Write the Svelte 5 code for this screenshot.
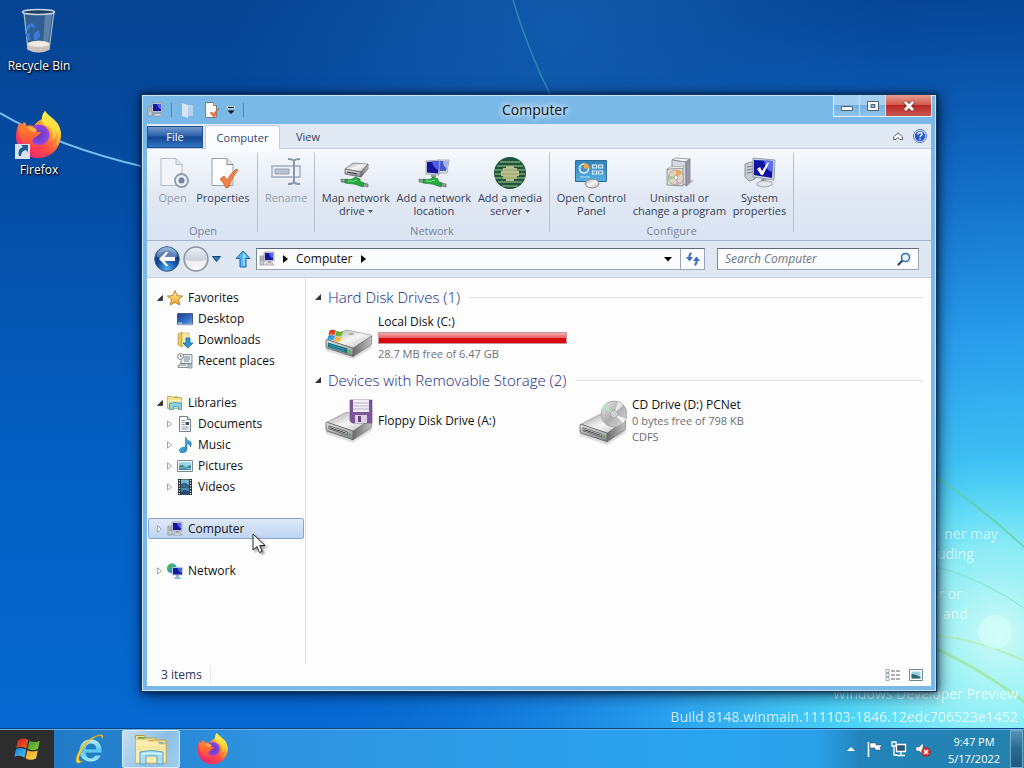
<script>
  const tree = [
    { label: 'Favorites', icon: 'star', open: true, children: [
      { label: 'Desktop', icon: 'desktop' },
      { label: 'Downloads', icon: 'downloads' },
      { label: 'Recent places', icon: 'recent' }
    ] },
    { label: 'Libraries', icon: 'libraries', open: true, children: [
      { label: 'Documents', icon: 'documents', more: true },
      { label: 'Music', icon: 'music', more: true },
      { label: 'Pictures', icon: 'pictures', more: true },
      { label: 'Videos', icon: 'videos', more: true }
    ] },
    { label: 'Computer', icon: 'computer', children: [] },
    { label: 'Network', icon: 'network', children: [] }
  ];

  const ribbon = [
    { label: 'Open', size: 'g-open', items: [
      { lines: ['Open'], icon: 'open', off: true },
      { lines: ['Properties'], icon: 'properties' }
    ] },
    { label: '', size: 'g-rename', items: [{ lines: ['Rename'], icon: 'rename', off: true }] },
    { label: 'Network', size: 'g-network', items: [
      { lines: ['Map network', 'drive'], icon: 'mapdrive', menu: true },
      { lines: ['Add a network', 'location'], icon: 'addnet' },
      { lines: ['Add a media', 'server'], icon: 'media', menu: true }
    ] },
    { label: 'Configure', size: 'g-configure', items: [
      { lines: ['Open Control', 'Panel'], icon: 'control' },
      { lines: ['Uninstall or', 'change a program'], icon: 'uninstall' },
      { lines: ['System', 'properties'], icon: 'system' }
    ] }
  ];

  const sections = [
    { title: 'Hard Disk Drives (1)', items: [
      { name: 'Local Disk (C:)', used: 100, notes: ['28.7 MB free of 6.47 GB'], icon: 'localdisk' }
    ] },
    { title: 'Devices with Removable Storage (2)', items: [
      { name: 'Floppy Disk Drive (A:)', notes: [], icon: 'floppy' },
      { name: 'CD Drive (D:) PCNet', notes: ['0 bytes free of 798 KB', 'CDFS'], icon: 'cd' }
    ] }
  ];

  let selected = $state('Computer');
  let query = $state('');
</script>

{#snippet driveBase()}
  <path d="M0 26 28 36 47 24v8L28 44 0 35z" fill="#999" opacity=".3" />
  <path d="M1 23 20 13q1-.5 3 0l23 5q2 1 1 2L28 33z" fill="url(#metalTop)" stroke="#888" stroke-width=".6" />
  <path d="M0 24q0-1 1-1l27 9v9L1 32q-1-1-1-2z" fill="url(#metalFront)" stroke="#555" stroke-width=".8" />
  <path d="M28 32 47 19v8q0 1-1 2L28 41z" fill="url(#metalSide)" stroke="#666" stroke-width=".6" />
{/snippet}

{#snippet driveSlot()}
  <path d="M3 26.500 22 33v3L3 29.500z" fill="#eee" stroke="#444" stroke-width=".8" />
  <path d="M4 28.500 21 34.300" stroke="#333" stroke-width="1" />
  <path d="M24.500 34.500v3" stroke="#28c22c" stroke-width="1.600" />
{/snippet}

{#snippet smallDrive()}
  <path d="M5 12 13 6l15 1-7 8z" fill="url(#metalTop)" stroke="#777" stroke-width=".7" />
  <path d="M5 12l16 3v5L5 17z" fill="url(#metalFront)" stroke="#555" stroke-width=".7" />
  <path d="M21 15l7-8v5l-7 8z" fill="url(#metalSide)" stroke="#666" stroke-width=".7" />
  <path d="M7 15l10 2" stroke="#333" />
{/snippet}

{#snippet netPipe()}
  <path d="M1 22l8 1v3l-8-1z" fill="#8fa39a" stroke="#56655d" stroke-width=".6" />
  <path d="M19 25l9 2v3l-9-2z" fill="#8fa39a" stroke="#56655d" stroke-width=".6" />
  <path d="M5 22q7 2 10-2l5 2q-1 3 4 4l-1 4q-9-4-18-4z" fill="#21ab3c" stroke="#0d7422" stroke-width=".6" />
  <path d="M8 24q5 1 9-1" stroke="#82e796" fill="none" />
{/snippet}

{#snippet pc()}
  <path d="M1 5h4v9H1z" fill="#c9ccd0" stroke="#83888f" stroke-width=".7" />
  <path d="M2 7h2M2 9h2" stroke="#6a6e75" stroke-width=".7" />
  <path d="M5 1h10v9H5z" fill="#d3d6dc" stroke="#8d929b" stroke-width=".7" />
  <path d="M6 2h8v7H6z" fill="#14149e" />
  <path d="M10 2h4v5q-3 0-4-5z" fill="#5260e8" />
  <path d="M9 10h3v2H9z" fill="#9b9fa6" />
  <path d="M6 14q1-3 5-2.500T15 14z" fill="#dde0e4" stroke="#888" stroke-width=".6" />
{/snippet}

{#snippet flag()}
  <path d="M2 4q4-3 8.500-.5L9 10.500Q5 8 .7 10z" fill="url(#fRed)" />
  <path d="M11.500 4q4 2.500 8.500.3L18.500 11Q14 13 10 10.800z" fill="url(#fGreen)" />
  <path d="M.5 11q4-2 8.400.5L7.500 18Q3 15.500-1 17.500z" fill="url(#fBlue)" />
  <path d="M9.800 12q4 2 8.500.2L17 18.500q-4.500 2.500-8.700 0z" fill="url(#fYellow)" />
{/snippet}

{#snippet firefox()}
  <path d="M42 12c3 6 5 12 3 19-3 10-12 16-22 16C10 47 1 37 1 25c0-5 1-9 4-14l1 4c1-2 2-3 3-4l2 4c3-1 6-1 8 0 2-4 6-6 8-7 0-3 1-6 3-8 2 5 9 9 12 15z" fill="url(#foxBody)" />
  <path d="M30 0c-4 5-4 11-1 14 8 2 10 9 8 15 4-1 5-6 4-9 3 6 1 13-4 17 9-4 11-14 7-22C41 8 33 5 30 0z" fill="url(#foxFlame)" />
  <circle cx="24" cy="24" r="10.500" fill="url(#foxGlobe)" />
  <path d="M4 13l2 3 4-5 2 5c4-1 7 0 10 3l-1 2h5c-1 4-6 4-8 7s1 6 6 6c4 0 7-2 9-5-1 9-12 13-20 8C5 32 2 21 4 13z" fill="url(#foxHead)" />
  <path d="M12 16c4-1 7 0 10 3l-2 2c-3 0-5-1-8-5z" fill="#ffbd4f" opacity=".8" />
{/snippet}

{#snippet art(name)}
  {#if name === 'star'}
    <svg class="i16" viewBox="0 0 16 16"><path d="M8 .7l2.200 4.900 5.300.5-4 3.600 1.200 5.300L8 12.300 3.300 15l1.200-5.300-4-3.600 5.300-.5z" fill="url(#gold)" stroke="#b8731a" stroke-width=".9" /></svg>
  {:else if name === 'desktop'}
    <svg class="i16" viewBox="0 0 16 16"><path d="M.5 2.500h15v11H.5z" fill="url(#screen)" stroke="#4c6178" /><path d="M1 13.500h15" stroke="#93a9bd" stroke-width="1.500" /><path d="M1 12h4" stroke="#c2e6ff" /></svg>
  {:else if name === 'downloads'}
    <svg class="i16" viewBox="0 0 16 16"><path d="M1 2l4-2v15l-4-2z" fill="#e7c767" stroke="#b28f38" stroke-width=".6" /><path d="M5 1h7v13H5z" fill="#faeaa5" stroke="#c7a24c" stroke-width=".6" /><path d="M9 6h4v5h3l-5 5-5-5h3z" fill="#2b93d6" stroke="#0d5d9d" stroke-width=".7" /></svg>
  {:else if name === 'recent'}
    <svg class="i16" viewBox="0 0 16 16"><path d="M4 1.500h11v9H4zM3 10.500h9v4H1v-2h2z" fill="#e9ecef" stroke="#7c858e" stroke-width=".9" /><path d="M7 4h6M7 6h6M7 8h5M4 12h5" stroke="#7b858d" /><circle cx="3.500" cy="3.500" r="3" fill="#f6f7f8" stroke="#7c858e" /><path d="M3.500 1.800v2h1.500" stroke="#555" stroke-width=".7" fill="none" /><path d="M11 11h4v4h-4z" fill="#bdc3c9" stroke="#7c858e" stroke-width=".7" /></svg>
  {:else if name === 'libraries'}
    <svg class="i16" viewBox="0 0 16 16"><path d="M.5 1.500h5l1 1h8v11H.5z" fill="#f5df89" stroke="#bea249" stroke-width=".8" /><path d="M7 1.500h4v1H7z" fill="#6db64c" /><path d="M.5 5.500h14" stroke="#fff6c9" /><path d="M2.500 8.500q5-2 12 0v6h-3v-3h-5v3h-4z" fill="#8bd2ec" stroke="#3b92b8" stroke-width=".8" /></svg>
  {:else if name === 'documents'}
    <svg class="i16" viewBox="0 0 16 16"><path d="M2.500.5h8l3 3v12h-11z" fill="#fbfcfd" stroke="#74818e" /><path d="M10.500.5v3h3" fill="#d9e1e8" stroke="#74818e" /><path d="M4.500 4.500h4M4.500 6.500h3M4.500 8.500h3M4.500 11h7M4.500 13h7" stroke="#8a98a6" /><path d="M8.500 6h3.500v3H8.500z" fill="#3d5366" /></svg>
  {:else if name === 'music'}
    <svg class="i16" viewBox="0 0 16 16"><path d="M8.500 0q1 3 4 4t1 6q-.3-3-3.500-3.500V12q0 3-3.500 3.800-4 .5-4.200-2.300Q2.500 10 8.500 10z" fill="url(#note)" stroke="#136b9f" stroke-width=".5" /></svg>
  {:else if name === 'pictures'}
    <svg class="i16" viewBox="0 0 16 16"><path d="M.5 2.500h15v11H.5z" fill="#fff" stroke="#7d8b97" /><path d="M2 4h12v8H2z" fill="#9bd3ef" /><path d="M2 8q3-2 5 0t7-1v2H2z" fill="#3f866f" /><path d="M2 9h12v3H2z" fill="#357fa9" /><path d="M2 10q5-1 12 1" stroke="#84cde6" fill="none" /></svg>
  {:else if name === 'videos'}
    <svg class="i16" viewBox="0 0 16 16"><path d="M1 0h14v16H1z" fill="#222c33" /><path d="M4 .5h8v7H4z" fill="#7db9d3" /><path d="M4 8.500h8v7H4z" fill="#458eb2" /><path d="M4 5q4-3 8 1v1.500H4z" fill="#35658b" /><path d="M4 13q4-4 8 0v2.500H4z" fill="#254c7b" /><path d="M2.500 1v15M13.500 1v15" stroke="#e3ebd9" stroke-width="1.300" stroke-dasharray="1.300 1.300" /></svg>
  {:else if name === 'computer'}
    <svg class="i16" viewBox="0 0 16 16">{@render pc()}</svg>
  {:else if name === 'network'}
    <svg class="i16" viewBox="0 0 16 16"><circle cx="5" cy="5.500" r="5" fill="#2b9bd3" /><path d="M1 3q4-4 6-1L5 5 3 5 2 8Q0 6 1 3z" fill="#47b84f" /><path d="M5.500 4.500h10v7.500h-10z" fill="#151d9e" stroke="#c6cbd7" /><path d="M10.500 5h4.500v5q-3 0-4.500-5z" fill="#4967e8" /><path d="M9.500 12h2v2h-2z" fill="#7a8b9f" /><path d="M7.500 15h6" stroke="#50aee0" stroke-width="1.500" /></svg>
  {:else if name === 'open'}
    <svg class="i32" viewBox="0 0 32 32"><path d="M4 1.500h15l6 6v21H4z" fill="#f1f4f9" stroke="#b6bdc9" /><path d="M19 1.500v6h6" fill="#dde2ea" stroke="#b6bdc9" /><circle cx="24.500" cy="23.500" r="6.500" fill="#e9eef5" stroke="#919cad" stroke-width="1.800" /><circle cx="24.500" cy="23.500" r="3" fill="#76839a" /></svg>
  {:else if name === 'properties'}
    <svg class="i32" viewBox="0 0 32 32"><path d="M5 1.500h15l6 6v21H5z" fill="#fdfdfe" stroke="#9aa0a8" /><path d="M20 1.500v6h6" fill="#e3e6ea" stroke="#858a92" /><path d="M13 22l4-3 3 4q4-7 9-11l2 1q-6 7-9 17l-3 1q-2-5-6-9z" fill="#f08049" stroke="#cc5622" stroke-width=".7" /></svg>
  {:else if name === 'rename'}
    <svg class="i32" viewBox="0 0 32 32"><path d="M2 9h28v11H2z" fill="#eef2f8" stroke="#9fabbb" stroke-width="1.400" /><path d="M5 12h14v5H5z" fill="#b9c2d0" stroke="#97a3b5" /><path d="M18 2q5 0 6 2 1-2 6-2M18 27q5 0 6-2 1 2 6 2M24 4v21" stroke="#8995a8" stroke-width="2" fill="none" /></svg>
  {:else if name === 'mapdrive'}
    <svg class="i32" viewBox="0 0 32 32">{@render smallDrive()}{@render netPipe()}</svg>
  {:else if name === 'addnet'}
    <svg class="i32" viewBox="0 0 32 32"><path d="M20 3h11l-2 13H19z" fill="#dfe3ea" stroke="#8d93a5" stroke-width=".7" /><path d="M21 4h9l-2 10h-7z" fill="#4657d6" /><path d="M25 4h5l-1 7q-4-1-4-7z" fill="#a8b4f6" /><path d="M8 4l14-1-1 15-13-1z" fill="#cfd5df" stroke="#8d93a5" stroke-width=".7" /><path d="M9 5l12-1-1 12.500-11-1z" fill="#14149b" /><path d="M14 4.500l7-.5-.6 9Q15 11 14 4.500z" fill="#4e5de4" /><path d="M13 18l5 .3v2l-5-.3z" fill="#8b9199" />{@render netPipe()}</svg>
  {:else if name === 'media'}
    <svg class="i32" viewBox="0 0 32 32"><circle cx="16" cy="16" r="16" fill="#1d5540" /><path d="M6 5h20M3 9h26M1 13h30M1 17h30M1 21h30M4 25h24M8 29h16" stroke="#7ba26e" stroke-width="1.300" /><path d="M12 9h8v2h3v3h2v5h-2v3h-3v2h-8v-2H9v-3H7v-5h2v-3h3z" fill="#bdbf88" /><path d="M8 17h16M9 21h14M10 13h13" stroke="#81a071" stroke-width=".8" /></svg>
  {:else if name === 'control'}
    <svg class="i32" viewBox="0 0 32 32"><path d="M.5 3.500h31v21H.5z" fill="url(#panel)" stroke="#2d6c98" /><circle cx="9" cy="11.500" r="4.500" fill="#4495cd" stroke="#e8f5ff" stroke-width="1.500" /><path d="M9 11.500V6a5.500 5.500 0 0 1 5.500 5.500z" fill="#f5a63c" /><path d="M5 20h10" stroke="#bae0f5" /><path d="M17.500 8h4v3h-4zm6 0h4v3h-4zm-6 6h4v3h-4zm6 0h4v3h-4z" fill="#4697cb" stroke="#dcf0fb" stroke-width="1.200" /><ellipse cx="17" cy="26.500" rx="7" ry="4.500" fill="url(#metalTop)" stroke="#858c96" /></svg>
  {:else if name === 'uninstall'}
    <svg class="i32" viewBox="0 0 32 32"><path d="M22 31l9-7-2-2z" fill="#777" opacity=".35" /><path d="M9 3l4-2 14 1-4 3z" fill="#f5f5f7" stroke="#85858e" stroke-width=".8" /><path d="M9 3l14 2v23L9 25z" fill="#d6d7e1" stroke="#85858e" stroke-width=".8" /><path d="M23 5l4-3v23l-4 4z" fill="#9898a8" stroke="#777784" stroke-width=".7" /><path d="M4 12l16-1v18l-16-1z" fill="#d9dbd9" stroke="#84877e" stroke-width=".8" /><path d="M4 12l3-2 16-1-3 2z" fill="#f5f7ef" stroke="#84877e" stroke-width=".5" /><circle cx="13" cy="20.500" r="7.500" fill="#dad7bd" stroke="#979786" stroke-width=".7" /><path d="M13 20.500V13a7.500 7.500 0 0 1 6 3z" fill="#eda864" /><path d="M13 20.500l-7 2a7 7 0 0 1-.3-4z" fill="#9fc694" /><path d="M13 20.500l4 6.500a8 8 0 0 1-4 1z" fill="#d8a9cd" /><circle cx="13" cy="20.500" r="2" fill="#f6f6f6" stroke="#888" stroke-width=".6" /></svg>
  {:else if name === 'system'}
    <svg class="i32" viewBox="0 0 32 32"><path d="M1 7l6-2 4 1v16l-6 2-4-4z" fill="#c8cbd0" stroke="#7d838a" stroke-width=".8" /><path d="M3 10l6-1M3 13l6-1M3 16l6-1" stroke="#777e87" stroke-width=".9" /><path d="M9 1l22 2-1 20-21-3z" fill="#cdd5df" stroke="#848c9b" stroke-width=".8" /><path d="M10 3l19 1-1 17-18-3z" fill="#1013a0" /><path d="M20 3.500l9 .5-.7 11Q21 13 20 3.500z" fill="#5870ed" /><path d="M13 12l3-2 2 4 6-9 1 1-6 12h-2z" fill="#fff" /><path d="M17 22h5v3h-5z" fill="#949ba5" /><path d="M13 26q5-4 15-1v3q-8 4-15 0z" fill="#e3e6e9" stroke="#828990" stroke-width=".7" /></svg>
  {:else if name === 'localdisk'}
    <svg class="i48" viewBox="0 0 48 48"><g transform="translate(1 4) scale(.97 .94)">{@render driveBase()}<path d="M2 26l20 6.500v5L2 31z" fill="#126c83" /><path d="M3 28l16 5.500M3 30l16 5.500" stroke="#48a8b5" stroke-width=".8" /><path d="M24.500 34v4" stroke="#38d02e" stroke-width="2" /><ellipse cx="26" cy="17" rx="3" ry="1" fill="#aaa" /></g><g transform="translate(3 14) scale(.75 .7)">{@render flag()}</g></svg>
  {:else if name === 'floppy'}
    <svg class="i48" viewBox="0 0 48 48"><g transform="translate(1 3) scale(.97 .97)">{@render driveBase()}{@render driveSlot()}</g><path d="M25 3h22v23H27l-2-2z" fill="#7d579c" stroke="#64427e" stroke-width=".6" /><path d="M28 3h16v12H28z" fill="#f1edf6" /><path d="M28 6h16M28 9h16M28 12h16" stroke="#bbaec8" /><path d="M30 18h12v8H30z" fill="#d9cfdf" /><path d="M33 19h3v6h-3z" fill="#6b477f" /></svg>
  {:else if name === 'cd'}
    <svg class="i48" viewBox="0 0 48 48"><g transform="translate(1 5) scale(.97 .97)">{@render driveBase()}{@render driveSlot()}</g><circle cx="35" cy="17" r="13" fill="url(#disc)" stroke="#999" stroke-width=".7" /><path d="M35 17L23 12a13 13 0 0 1 4-5.500z" fill="#b9dfb9" /><path d="M35 17l9 9a13 13 0 0 0 3-4z" fill="#fff" opacity=".8" /><path d="M35 17l4-12a13 13 0 0 1 5 3z" fill="#fff" opacity=".7" /><circle cx="35" cy="17" r="3.500" fill="#ddd" stroke="#999" stroke-width=".7" /><circle cx="35" cy="17" r="1.300" fill="#fff" stroke="#888" stroke-width=".5" /></svg>
  {/if}
{/snippet}

<svg class="defs" width="0" height="0" aria-hidden="true">
  <defs>
    <linearGradient id="metalTop" x2="1" y2="1"><stop stop-color="#a0a0a0" /><stop offset=".5" stop-color="#f6f6f6" /><stop offset="1" stop-color="#b4b4b4" /></linearGradient>
    <linearGradient id="metalFront" y2="1" x2="0"><stop stop-color="#e8e8e8" /><stop offset="1" stop-color="#808080" /></linearGradient>
    <linearGradient id="metalSide"><stop stop-color="#6c6c6c" /><stop offset="1" stop-color="#c0c0c0" /></linearGradient>
    <linearGradient id="disc" x2="1" y2="1"><stop stop-color="#ececec" /><stop offset=".5" stop-color="#aeaeae" /><stop offset="1" stop-color="#dcdcdc" /></linearGradient>
    <linearGradient id="panel" x2="0" y2="1"><stop stop-color="#3182bb" /><stop offset="1" stop-color="#57b0e0" /></linearGradient>
    <linearGradient id="screen" x2="1" y2="1"><stop stop-color="#183f94" /><stop offset=".6" stop-color="#356dc4" /><stop offset="1" stop-color="#74a9e3" /></linearGradient>
    <linearGradient id="note" x2="1" y2="1"><stop stop-color="#72c7ec" /><stop offset="1" stop-color="#1274b1" /></linearGradient>
    <linearGradient id="gold" x2="0" y2="1"><stop stop-color="#fff3a8" /><stop offset="1" stop-color="#f0a021" /></linearGradient>
    <linearGradient id="foxBody" x1="1" y1="0" x2=".3" y2="1"><stop stop-color="#fff04a" /><stop offset=".4" stop-color="#ff9c2a" /><stop offset=".7" stop-color="#ff4a48" /><stop offset="1" stop-color="#ee2373" /></linearGradient>
    <linearGradient id="foxFlame" x2="0" y2="1"><stop stop-color="#fff450" /><stop offset=".6" stop-color="#ffd13a" /><stop offset="1" stop-color="#ff9a2c" /></linearGradient>
    <linearGradient id="foxHead" x2="0" y2="1"><stop stop-color="#ff9128" /><stop offset=".6" stop-color="#ff5c38" /><stop offset="1" stop-color="#fa375f" /></linearGradient>
    <radialGradient id="foxGlobe"><stop stop-color="#6037b8" /><stop offset="1" stop-color="#9648e8" /></radialGradient>
    <linearGradient id="fRed" x2="1" y2="1"><stop stop-color="#c9201d" /><stop offset="1" stop-color="#f8622c" /></linearGradient>
    <linearGradient id="fGreen" x2="1" y2="1"><stop stop-color="#3d9528" /><stop offset="1" stop-color="#8ace3a" /></linearGradient>
    <linearGradient id="fBlue" x2="1" y2="1"><stop stop-color="#1584cf" /><stop offset="1" stop-color="#48bdf3" /></linearGradient>
    <linearGradient id="fYellow" x2="1" y2="1"><stop stop-color="#f79c22" /><stop offset="1" stop-color="#ffda52" /></linearGradient>
    <radialGradient id="ball" cx=".5" cy=".9" r=".8"><stop stop-color="#4fb4f2" /><stop offset=".45" stop-color="#1958a8" /><stop offset=".8" stop-color="#0f3882" /><stop offset="1" stop-color="#6c97ce" /></radialGradient>
    <linearGradient id="pale" x2="0" y2="1"><stop stop-color="#eef1f6" /><stop offset=".5" stop-color="#ccd3de" /><stop offset="1" stop-color="#f4f7fa" /></linearGradient>
    <linearGradient id="ie" x2="0" y2="1"><stop stop-color="#c4f3ff" /><stop offset=".5" stop-color="#58c7f3" /><stop offset="1" stop-color="#a8eaff" /></linearGradient>
  </defs>
</svg>

<div class="screen">
  <main class="desktop">
    <svg class="wallpaper" viewBox="0 0 1024 768" preserveAspectRatio="none" aria-hidden="true">
      <defs>
        <linearGradient id="sky" x2="0" y2="1"><stop stop-color="#064392" /><stop offset=".25" stop-color="#054da4" /><stop offset=".6" stop-color="#0460c4" /><stop offset="1" stop-color="#0669d2" /></linearGradient>
        <radialGradient id="glow" gradientUnits="userSpaceOnUse" cx="1010" cy="690" r="720"><stop stop-color="#70ecf5" /><stop offset=".25" stop-color="#48cff5" /><stop offset=".5" stop-color="#2ba2f0" stop-opacity=".9" /><stop offset="1" stop-color="#0c6ad5" stop-opacity="0" /></radialGradient>
        <radialGradient id="core" gradientUnits="userSpaceOnUse" cx="1000" cy="635" r="180"><stop stop-color="#cdfbf6" /><stop offset=".5" stop-color="#9cf2f6" stop-opacity=".75" /><stop offset="1" stop-color="#60def6" stop-opacity="0" /></radialGradient>
        <radialGradient id="topglow" gradientUnits="userSpaceOnUse" cx="560" cy="20" r="330"><stop stop-color="#1763b5" stop-opacity=".7" /><stop offset="1" stop-color="#1767bd" stop-opacity="0" /></radialGradient>
      </defs>
      <path d="M0 0h1024v768H0z" fill="url(#sky)" />
      <path d="M0 0h1024v768H0z" fill="url(#topglow)" />
      <path d="M0 0h1024v768H0z" fill="url(#glow)" />
      <path d="M0 0h1024v768H0z" fill="url(#core)" />
      <path d="M0 113Q56 146 145 167" fill="none" stroke="#78bdf0" stroke-width="2" />
      <path d="M513 0q16 54 40 100" fill="none" stroke="#2f86b5" stroke-width="1.500" />
      <g fill="none" stroke="#62cf96" opacity=".7">
        <path d="M935 476q50 34 92 74" stroke-width="2" />
        <path d="M935 566q50 14 92 44" stroke="#7bdcc1" />
        <path d="M935 635q45 5 92 27" stroke="#b0eda8" stroke-width="2" />
        <path d="M935 648q48 22 92 56" stroke="#9de58f" stroke-width="3" />
      </g>
      <circle cx="995" cy="632" r="17" fill="#d9fffa" opacity=".5" />
    </svg>

    <div class="notice">
      <p class="n1">ner may</p>
      <p class="n2">uding</p>
      <p class="n3">r or</p>
      <p class="n4">and</p>
    </div>
    <p class="build">Windows Developer Preview<br />Build 8148.winmain.111103-1846.12edc706523e1452</p>

    <div class="shortcuts">
      <button class="shortcut">
        <svg viewBox="0 0 48 48" aria-hidden="true">
          <path d="M8 5l5 38q10 6 21 0l5-38z" fill="#54748f" opacity=".55" />
          <path d="M9 5l4 38M39 5l-5 38" stroke="#a3b9c8" stroke-width="1.200" />
          <path d="M30 7h7l-4 32h-5z" fill="#dbe8ef" opacity=".25" />
          <ellipse cx="23.500" cy="5" rx="16" ry="2.500" fill="#1d3f65" stroke="#c4d5df" stroke-width="1.500" />
          <path d="M12 36q12-5 23 0l-1 7q-10 5-21 0z" fill="#c9c3bc" />
          <ellipse cx="23.500" cy="37" rx="11" ry="3" fill="#efeae3" />
          <path d="M13 18l4-2 4 4-3 1-2-2-3 5-2-2zM11 26l4 0-1 4 2 2-2 2-3-5zM19 33v-7l5-3 1 6-3 4z" fill="#3a7bdd" />
        </svg>
        <span>Recycle Bin</span>
      </button>
      <button class="shortcut">
        <svg viewBox="0 0 48 48" aria-hidden="true">
          {@render firefox()}
          <path d="M0 33h15v15H0z" fill="#d9e2ec" />
          <path d="M4 45q-2-7 4-9L6 34h7v7l-2-2q-5 1-5 6z" fill="#1d5ba5" />
        </svg>
        <span>Firefox</span>
      </button>
    </div>

    <section class="window" aria-label="Computer">
      <header class="titlebar">
        <div class="quick">
          <button aria-label="System menu"><svg class="i16" viewBox="0 0 16 16">{@render pc()}</svg></button>
          <i class="bar"></i>
          <button aria-label="Open" class="dim"><svg class="i16" viewBox="0 0 16 16"><path d="M2 1l6 2v13l-6-2z" fill="#d8e5f4" /><path d="M8 3h5v11H8z" fill="#b6cfec" /></svg></button>
          <button aria-label="Properties"><svg class="i16" viewBox="0 0 16 16"><path d="M1.500.5h8l3 3v12h-11z" fill="#fff" stroke="#777f89" /><path d="M9.500.5v3h3" fill="#ddd" stroke="#777f89" /><path d="M6 11l2-1 1.500 2Q12 8 15 6q-3 4-4 9H9.500Q8 13 6 11z" fill="#ee763b" stroke="#c95c25" stroke-width=".5" /></svg></button>
          <button aria-label="Customize toolbar" class="thin"><svg width="8" height="8" viewBox="0 0 8 8"><path d="M0 1.500h8" stroke="#fff" stroke-width="3" opacity=".6" /><path d="M1 1.500h6" stroke="#111" stroke-width="1.200" /><path d="M.5 4.500h7L4 8z" fill="#111" /></svg></button>
          <i class="bar"></i>
        </div>
        <h1>Computer</h1>
        <div class="captions">
          <button aria-label="Minimize"><svg width="14" height="12" viewBox="0 0 14 12"><path d="M1.500 6.500h11v4h-11z" fill="#fff" stroke="#4d6075" /></svg></button>
          <button aria-label="Maximize"><svg width="14" height="12" viewBox="0 0 14 12"><path d="M1.500 1.500h11v9h-11z" fill="#fff" stroke="#4d6075" /><path d="M5 4.500h4v3H5z" fill="#7eb8e3" stroke="#4d6075" /></svg></button>
          <button aria-label="Close" class="close"><svg width="14" height="12" viewBox="0 0 14 12"><path d="M3 2l8 8M11 2l-8 8" stroke="#6d3434" stroke-width="4.500" /><path d="M3 2l8 8M11 2l-8 8" stroke="#fff" stroke-width="2.800" /></svg></button>
        </div>
      </header>

      <div class="client">
        <div class="tabs">
          <button class="tab file">File</button>
          <button class="tab current">Computer</button>
          <button class="tab">View</button>
          <span class="spring"></span>
          <button class="mini" aria-label="Minimize the ribbon"><svg width="12" height="10" viewBox="0 0 12 10"><path d="M1.500 6L6 1.800 10.500 6v2.500H8L6 6.500 4 8.500H1.500z" fill="#fff" stroke="#555e6b" /></svg></button>
          <button class="mini" aria-label="Help"><svg width="14" height="14" viewBox="0 0 14 14"><circle cx="7" cy="7" r="6.500" fill="#fff" stroke="#3c6bd6" /><circle cx="7" cy="7" r="5.200" fill="#2552cf" /><path d="M5 5.500q0-2 2-2t2 1.700q0 1-1 1.500T7 8.200M7 9.500V11" fill="none" stroke="#fff" stroke-width="1.400" /></svg></button>
        </div>

        <div class="ribbon">
          {#each ribbon as group}
            <div class="group {group.size}">
              <div class="tools">
                {#each group.items as tool}
                  <button class="tool" disabled={tool.off}>
                    {@render art(tool.icon)}
                    <span>{tool.lines[0]}{#if tool.lines[1]}<br />{tool.lines[1]}{/if}{#if tool.menu}<svg class="caret" width="5" height="3" viewBox="0 0 5 3"><path d="M0 0h5L2.500 3z" fill="#47546a" /></svg>{/if}</span>
                  </button>
                {/each}
              </div>
              <div class="caption">{group.label}</div>
            </div>
          {/each}
        </div>

        <div class="nav">
          <button class="round" aria-label="Back"><svg width="26" height="26" viewBox="0 0 26 26"><circle cx="13" cy="13" r="12.300" fill="url(#ball)" stroke="#3f5c85" /><path d="M3 11a10 10 0 0 1 20 0q-10 3-20 0z" fill="#b9d3ef" opacity=".45" /><path d="M5 13l7-7h2.500l-4 5H21v4H10.500l4 5H12z" fill="#fff" /></svg></button>
          <button class="round" aria-label="Forward"><svg width="26" height="26" viewBox="0 0 26 26"><circle cx="13" cy="13" r="12" fill="url(#pale)" stroke="#8a929e" stroke-width="1.400" /><path d="M3 14q10 3 20 0a10 10 0 0 1-20 0z" fill="#fff" opacity=".6" /></svg></button>
          <button class="history" aria-label="Recent locations"><svg width="9" height="6" viewBox="0 0 9 6"><path d="M.5.5h8L4.500 5.500z" fill="#3277b7" stroke="#17487d" /></svg></button>
          <button class="up" aria-label="Up"><svg width="16" height="18" viewBox="0 0 16 18"><path d="M8 1l7 7.500h-4V17H5V8.500H1z" fill="#52b4f0" stroke="#2767a5" /><path d="M8 3l4 4H9.500v9H8z" fill="#a8e0fc" /></svg></button>
          <div class="address">
            <svg class="i16" viewBox="0 0 16 16">{@render pc()}</svg>
            <svg class="step" width="5" height="8" viewBox="0 0 5 8"><path d="M0 0l5 4-5 4z" /></svg>
            <a href="#computer">Computer</a>
            <svg class="step" width="5" height="8" viewBox="0 0 5 8"><path d="M0 0l5 4-5 4z" /></svg>
            <span class="spring"></span>
            <button class="drop" aria-label="Previous locations"><svg width="8" height="5" viewBox="0 0 8 5"><path d="M0 0h8L4 4.500z" /></svg></button>
            <button class="refresh" aria-label="Refresh"><svg width="14" height="14" viewBox="0 0 14 14"><path d="M5.500 1Q3 2 3.500 6M8.500 13q2.500-1 2-5" fill="none" stroke="#3d6fc0" stroke-width="2" /><path d="M0 5h7l-3.500 4.500zM7 9h7l-3.500-4.500z" fill="#3d6fc0" /></svg></button>
          </div>
          <label class="search">
            <input type="text" placeholder="Search Computer" aria-label="Search Computer" bind:value={query} />
            <svg width="14" height="14" viewBox="0 0 14 14"><path d="M6 8L1.500 12.500" stroke="#284e7c" stroke-width="2.400" stroke-linecap="round" /><circle cx="8.500" cy="5.500" r="4" fill="#e8f4fd" stroke="#3b73ac" stroke-width="1.600" /></svg>
          </label>
        </div>

        <div class="body">
          <nav class="tree" aria-label="Folders">
            {#each tree as node}
              <ul>
                <li>
                  <button class="row" class:selected={selected === node.label} onclick={() => (selected = node.label)}>
                    <svg class="twist" width="7" height="8" viewBox="0 0 7 8">{#if node.open}<path d="M6.500 1.500v5h-5z" fill="#333" stroke="#111" stroke-width=".6" />{:else}<path d="M1.500 .8L5.500 4l-4 3.200z" fill="#fff" stroke="#a4a4a4" />{/if}</svg>
                    {@render art(node.icon)}<span>{node.label}</span>
                  </button>
                </li>
                {#each node.children as leaf}
                  <li>
                    <button class="row leaf" class:selected={selected === leaf.label} onclick={() => (selected = leaf.label)}>
                      <svg class="twist" width="7" height="8" viewBox="0 0 7 8">{#if leaf.more}<path d="M1.500 .8L5.500 4l-4 3.200z" fill="#fff" stroke="#a4a4a4" />{/if}</svg>
                      {@render art(leaf.icon)}<span>{leaf.label}</span>
                    </button>
                  </li>
                {/each}
              </ul>
            {/each}
          </nav>
          <div class="files">
            {#each sections as section}
              <section>
                <h2><svg width="6" height="6" viewBox="0 0 6 6"><path d="M6 0v6H0z" fill="#333" /></svg><span>{section.title}</span></h2>
                <div class="items">
                  {#each section.items as item}
                    <button class="item">
                      {@render art(item.icon)}
                      <span class="info">
                        <span class="name">{item.name}</span>
                        {#if item.used}<span class="meter"><span class="fill" style="width: {item.used}%"></span></span>{/if}
                        {#each item.notes as note}<span class="note">{note}</span>{/each}
                      </span>
                    </button>
                  {/each}
                </div>
              </section>
            {/each}
          </div>
        </div>

        <footer class="status">
          <span class="count">3 items</span>
          <span class="spring"></span>
          <button aria-label="Details view"><svg width="16" height="12" viewBox="0 0 16 12"><path d="M1 .5h3v3H1zm0 4h3v3H1zm0 4h3v3H1z" fill="#fff" stroke="#8c95a0" stroke-width=".8" /><path d="M6 2h4M11 2h4M6 6h4M11 6h4M6 10h4M11 10h4" stroke="#5b6168" /></svg></button>
          <button aria-label="Large icons view"><svg width="14" height="12" viewBox="0 0 14 12"><path d="M.5.5h13v11H.5z" fill="#fff" stroke="#6d8894" /><path d="M2.500 2.500h9v7h-9z" fill="#9ad0e1" /><path d="M2.500 5q4 0 9 3v1.500h-9z" fill="#2d6670" /></svg></button>
        </footer>
      </div>
    </section>

    <svg class="pointer" width="14" height="21" viewBox="0 0 14 21" aria-hidden="true"><path d="M1 1v16l4-3.500 2.500 6 2.700-1.200L7.700 12.500H13z" fill="#fff" stroke="#222" /></svg>
  </main>

  <footer class="taskbar">
    <button class="start" aria-label="Start"><svg width="28" height="28" viewBox="-2 1 23 20">{@render flag()}</svg></button>
    <button class="app" aria-label="Internet Explorer"><svg width="32" height="32" viewBox="0 0 32 32"><path d="M17 6C9 6 5 12 5 18s5 11 12 11c5 0 9-3 10-7h-6c-1 2-2 3-4 3-3 0-5-2-5-5h16c1-8-4-14-11-14zm-5 10c0-3 2-5 5-5s5 2 5 5z" fill="url(#ie)" stroke="#1b79b6" stroke-width=".8" /><path d="M28 6c2-3 1-5-3-4C14 4 3 17 2 27c0 4 3 4 7 1-3 1-4 0-4-3C6 17 15 6 24 3c3-1 4 0 4 3z" fill="#f7d440" stroke="#c79016" stroke-width=".5" /></svg></button>
    <button class="app running" aria-label="Windows Explorer"><svg width="34" height="32" viewBox="0 0 34 32"><path d="M1.500 4V2.500h9L12 5h9l1 2h10v23H1.500z" fill="#f6df89" stroke="#bd9a42" /><path d="M4 4h7v3H4z" fill="#5da851" /><path d="M12 7h8v2h-8z" fill="#df8244" /><path d="M21 9h9v2h-9z" fill="#7bb5d4" /><path d="M1.500 6h12l2 2h8l2 3h6.500v19H1.500z" fill="#fbedae" stroke="#d3b25d" stroke-width=".8" /><path d="M3 14h28M3 17h28" stroke="#f3dc8a" /><path d="M6 19q12-3 23 0v12h-6v-8H12v8H6z" fill="#a9def2" stroke="#59a4c6" /><path d="M7 21q10-2 21 0" stroke="#e8faff" fill="none" /></svg></button>
    <button class="app" aria-label="Firefox"><svg width="32" height="32" viewBox="0 0 48 48">{@render firefox()}</svg></button>
    <span class="spring"></span>
    <div class="tray">
      <button aria-label="Show hidden icons"><svg width="16" height="16" viewBox="0 0 16 16"><path d="M4 10h8L8 6z" fill="#fff" /></svg></button>
      <button aria-label="Action Center"><svg width="16" height="16" viewBox="0 0 16 16"><path d="M1.500 1v15" stroke="#fff" stroke-width="1.600" /><path d="M3 2h6v2h6l-2 2.500 1 2.500H8V7H3z" fill="#fff" stroke="#25465e" stroke-width=".5" /></svg></button>
      <button aria-label="Network"><svg width="16" height="16" viewBox="0 0 16 16"><path d="M5.500 3.500h9v7h-9z" fill="#305875" stroke="#fff" stroke-width="1.300" /><path d="M10 11v3M6 14.500h8" stroke="#fff" stroke-width="1.300" /><path d="M1 1h4v4H1zM3 5v9h3" fill="none" stroke="#fff" stroke-width="1.300" /></svg></button>
      <button aria-label="Volume muted"><svg width="16" height="16" viewBox="0 0 16 16"><path d="M1 6h3l4-4v12l-4-4H1z" fill="#fff" stroke="#25465e" stroke-width=".5" /><circle cx="11" cy="11" r="4.500" fill="#d93232" stroke="#a61f1f" stroke-width=".6" /><path d="M9 9l4 4M13 9l-4 4" stroke="#fff" stroke-width="1.600" /></svg></button>
    </div>
    <time class="clock">9:47 PM<br />5/17/2022</time>
    <button class="peek" aria-label="Show desktop"></button>
  </footer>
</div>

<style>
  :global(body) { margin: 0; }
  .screen {
    min-height: 100vh;
    display: flex;
    flex-direction: column;
    position: relative;
    overflow: hidden;
    font: 12px/16px "Open Sans", "Noto Sans", sans-serif;
    color: #111;
  }
  .defs { position: absolute; }
  button {
    font: inherit;
    color: inherit;
    background: none;
    border: 0;
    padding: 0;
    margin: 0;
    text-align: left;
  }
  svg { display: block; flex: none; }
  p, h1, h2, ul { margin: 0; padding: 0; font-weight: 400; }
  ul { list-style: none; }
  .spring { flex: 1; }
  .i16 { width: 16px; height: 16px; }
  .i32 { width: 32px; height: 32px; }
  .i48 { width: 48px; height: 48px; }

  .desktop { flex: 1; display: flex; min-height: 600px; }
  .wallpaper { position: absolute; inset: 0; width: 100%; height: 100%; }
  .notice, .build { position: absolute; color: #fff; font-size: 14px; opacity: .6; text-align: right; white-space: nowrap; }
  .notice { right: 26px; bottom: 144px; line-height: 20px; }
  .notice .n2 { margin-right: 24px; }
  .notice .n3 { margin: 20px 36px 0 0; }
  .notice .n4 { margin-right: 30px; }
  .build { right: 6px; bottom: 40px; line-height: 23px; opacity: .75; }

  .shortcuts { position: relative; display: flex; flex-direction: column; gap: 22px; padding: 7px 0 0 1px; }
  .shortcut {
    width: 76px;
    height: 82px;
    display: flex;
    flex-direction: column;
    align-items: center;
    gap: 3px;
    color: #fff;
    text-shadow: 0 1px 2px #000, 1px 1px 2px #000;
  }
  .shortcut svg { width: 48px; height: 48px; }

  .window {
    position: absolute;
    inset: 94px 87px 76px 141px;
    display: flex;
    flex-direction: column;
    box-sizing: border-box;
    border: 1px solid #163a5f;
    background: #7ab8e8;
    box-shadow: inset 0 0 0 1px #c2e3fa, 0 0 5px rgba(0, 10, 30, .8), 2px 3px 14px rgba(0, 10, 30, .65);
    padding: 0 5px 5px;
  }
  .titlebar { display: grid; grid-template-columns: 1fr auto 1fr; height: 29px; }
  .titlebar h1 { font-size: 14px; line-height: 30px; margin-right: 8px; text-shadow: 0 0 6px #fff, 0 0 6px #fff; }
  .quick { display: flex; align-items: center; gap: 8px; }
  .quick .thin { margin-left: -1px; }
  .bar { width: 1px; height: 14px; background: #4c86b5; }
  .captions { justify-self: end; align-self: start; display: flex; height: 21px; border: 1px solid #e0f0fb; border-top: 0; margin-right: -1px; }
  .captions button { width: 26px; display: grid; place-items: center; border-right: 1px solid #c9e4f7; background: linear-gradient(#a5cff0 48%, #74b0e0 50%, #8fc5ed); }
  .captions .close { width: 45px; border: 0; background: linear-gradient(#e3a093, #d0564a 48%, #b92a25 50%, #c9564f); }

  .client { flex: 1; min-height: 0; display: flex; flex-direction: column; background: #fdfdfe; }
  .tabs { display: flex; align-items: flex-end; height: 25px; background: #e1e9f5; border-bottom: 1px solid #c3cddc; box-sizing: border-box; font-size: 11px; color: #33405c; }
  .tab { height: 22px; padding: 0 16px; text-align: center; }
  .tab.file { width: 56px; background: linear-gradient(#7297cd, #2a5fac 45%, #14458f 50%, #2f78c4); color: #fff; border: 1px solid #24508f; box-sizing: border-box; }
  .tab.current { width: 75px; height: 24px; padding: 0; margin: 0 0 -1px 2px; background: #fafcfe; border: 1px solid #c3cddc; border-bottom: 0; border-radius: 3px 3px 0 0; box-sizing: border-box; color: #32437a; }
  .mini { align-self: center; display: grid; place-items: center; width: 22px; height: 20px; }

  .ribbon { display: flex; height: 92px; box-sizing: border-box; background: linear-gradient(#f7fafe, #e2e9f4 50%, #d9e3f2); border-bottom: 1px solid #a5b3c6; padding: 4px 0; font-size: 11px; line-height: 13px; color: #33405c; }
  .group { box-sizing: border-box; display: flex; flex-direction: column; border-right: 1px solid #b4c0d2; height: 79px; }
  .g-open { width: 111px; padding-left: 2px; }
  .g-rename { width: 57px; }
  .g-network { width: 235px; }
  .g-configure { width: 244px; }
  .tools { display: flex; flex: none; justify-content: space-evenly; height: 71px; }
  .tool { display: flex; flex-direction: column; align-items: center; text-align: center; white-space: nowrap; gap: 2px; padding-top: 4px; height: 67px; box-sizing: border-box; }
  .tool:disabled { color: #949cab; }
  .caret { display: inline-block; vertical-align: 2px; margin-left: 3px; }
  .caption { text-align: center; color: #78839a; line-height: 14px; }

  .nav { display: flex; align-items: center; height: 37px; box-sizing: border-box; padding: 0 12px 0 7px; background: #dfe7f3; border-bottom: 1px solid #c4cfdf; }
  .round { margin-right: 3px; }
  .history { padding: 8px 0; }
  .up { padding: 0 5px 0 14px; }
  .address, .search { display: flex; align-items: center; height: 22px; box-sizing: border-box; border: 1px solid #7e8a9a; border-color: #5f6977 #98a5b7 #98a5b7 #7e8a9a; background: #fafcfe; }
  .address { flex: 1; min-width: 160px; gap: 8px; padding-left: 2px; }
  .address a { color: #111; text-decoration: none; }
  .drop { padding: 8px 0; }
  .refresh { width: 24px; height: 20px; border-left: 1px solid #98a5b7; display: grid; place-items: center; }
  .search { width: 202px; margin-left: 12px; padding: 0 7px; }
  .search input { flex: 1; min-width: 0; border: 0; outline: 0; padding: 0; background: none; font: inherit; }
  .search input::placeholder { color: #6d7480; font-style: italic; opacity: 1; }

  .body { flex: 1; min-height: 0; display: flex; }
  .tree { width: 159px; box-sizing: border-box; border-right: 1px solid #d5e0ee; padding: 9px 1px 0; display: flex; flex-direction: column; gap: 21px; }
  .row { display: flex; align-items: center; gap: 4px; width: 100%; height: 21px; box-sizing: border-box; border: 1px solid transparent; border-radius: 2px; padding-left: 7px; white-space: nowrap; }
  .row .i16 { margin-right: 1px; }
  .row.leaf { padding-left: 17px; }
  .row.selected { border-color: #86a4d0; background: linear-gradient(#dfeafa, #bed3f3); }

  .files { flex: 1; min-width: 0; padding: 8px 8px 0 9px; }
  .files h2 { display: flex; align-items: center; gap: 7px; height: 22px; font-size: 15px; font-weight: 300; line-height: 20px; color: #14257e; }
  .files h2::after { content: ""; flex: 1; height: 1px; background: #dcdfe4; margin-left: 2px; }
  .items { display: grid; grid-template-columns: repeat(auto-fill, 254px); padding: 6px 0 7px 10px; }
  .item { display: flex; align-items: center; gap: 5px; height: 48px; }
  .info { display: flex; flex-direction: column; white-space: nowrap; }
  .note { color: #6c6f74; font-size: 11px; }
  .meter { width: 187px; height: 10px; margin: 2px 0; border: 1px solid #c6979a; background: #eee; display: flex; }
  .fill { background: linear-gradient(#f3aaaa, #ea6468 45%, #d50b10 50%, #d9070b); }

  .status { display: flex; align-items: center; height: 22px; gap: 8px; padding: 0 8px 0 14px; color: #2a3556; }
  .count { border-right: 1px solid #e3e6ea; padding-right: 8px; }

  .pointer { position: absolute; left: 252px; top: 533px; filter: drop-shadow(2px 2px 1px rgba(0, 0, 0, .4)); }

  .taskbar { position: relative; display: flex; height: 39px; box-sizing: border-box; border-top: 1px solid #6bb0e6; box-shadow: 0 -1px #0c4680; background: linear-gradient(90deg, #1d73bf, #2f93e0 25%, #2aa4ee 70%, #2aa0e8 80%, #2384ba 84%, #2582ae); color: #fff; }
  .taskbar > button { display: grid; place-items: center; box-sizing: border-box; }
  .start { width: 54px; background: #2d2d2d; }
  .app { width: 58px; margin-left: 7px; }
  .app + .app { margin-left: 4px; }
  .app + .app.running { margin-left: 3px; border: 1px solid #d6ecfb; border-radius: 2px; background: linear-gradient(120deg, #c6dff2, #8bbfe5 60%, #a0cfee); }
  .tray { display: flex; align-items: center; gap: 8px; }
  .clock { width: 66px; margin: 0 3px 0 10px; text-align: center; font-size: 11px; line-height: 17px; padding-top: 3px; }
  .peek { width: 13px; margin-right: 1px; border: 1px solid #74abcb; background: linear-gradient(#5893b8, #276a92 50%, #1c5b83); }
</style>
